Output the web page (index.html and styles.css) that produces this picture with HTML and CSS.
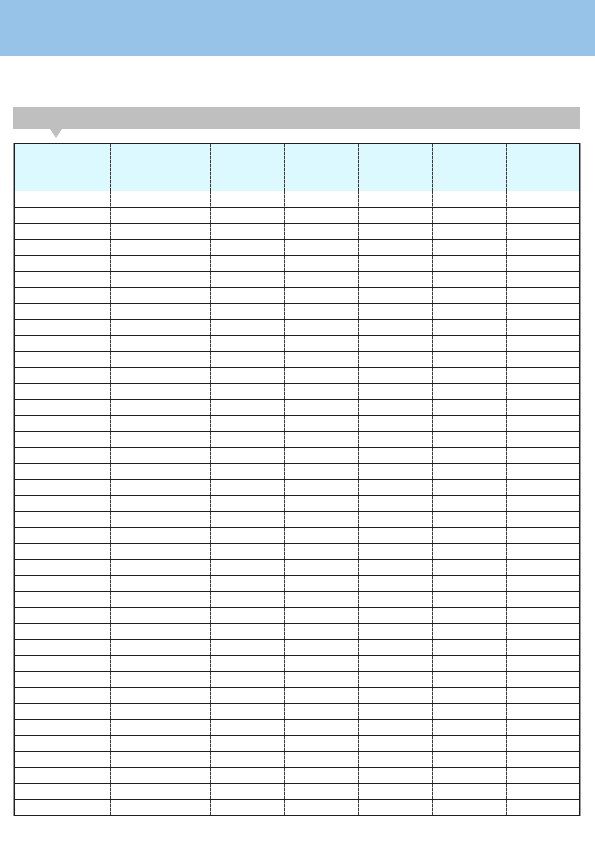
FILE: index.html
```html
<!DOCTYPE html>
<html>
<head>
<meta charset="utf-8">
<link rel="stylesheet" href="styles.css">
</head>
<body>
<header class="topbar"></header>
<section class="panel">
  <div class="titlebar"></div>
  <div class="pointer"></div>
  <div class="sheet" id="sheet">
    <div class="row head">
      <div class="cell"></div><div class="cell"></div><div class="cell"></div><div class="cell"></div><div class="cell"></div><div class="cell"></div><div class="cell"></div>
    </div>
  </div>
</section>
<script src="script.js"></script>
</body>
</html>
```
FILE: script.js
```js
(function () {
  var sheet = document.getElementById('sheet');
  for (var r = 0; r < 39; r++) {
    var row = document.createElement('div');
    row.className = r === 0 ? 'row first' : 'row line';
    for (var c = 0; c < 7; c++) {
      var cell = document.createElement('div');
      cell.className = 'cell';
      row.appendChild(cell);
    }
    sheet.appendChild(row);
  }
})();
```
FILE: styles.css
```css
html, body {
  margin: 0;
  padding: 0;
  background: #ffffff;
  font-family: "Liberation Sans", Arial, sans-serif;
}
.topbar {
  height: 56px;
  background: #98c3e9;
}
.panel {
  padding-top: 51px;
  display: flex;
  flex-direction: column;
}
.titlebar {
  margin-left: 13px;
  width: 567px;
  height: 22px;
  background: #bfbfbf;
}
.pointer {
  margin-left: 50px;
  width: 0;
  height: 0;
  border-left: 6px solid transparent;
  border-right: 6px solid transparent;
  border-top: 9px solid #bfbfbf;
  margin-bottom: 5px;
}
.sheet {
  margin-left: 14px;
  width: 566px;
  box-sizing: border-box;
  border: 1px solid #1e1e1e;
  box-shadow: -1px 0 0 #9a9a9a, 1px 0 0 #9a9a9a;
  display: flex;
  flex-direction: column;
}
.row {
  display: grid;
  grid-template-columns: 96px 100px 74px 74px 74px 74px 1fr;
}
.row.head {
  height: 47px;
  background: #dbf9fe;
}
.row.first {
  height: 16px;
}
.row.line {
  height: 16px;
  box-sizing: border-box;
  border-top: 1px solid #1e1e1e;
}
.cell {
  background: repeating-linear-gradient(to bottom, #3a3a3a 0 3px, #b0b0b0 3px 4px) right top / 1px 100% no-repeat;
}
.cell:last-child {
  background: none;
}
```
